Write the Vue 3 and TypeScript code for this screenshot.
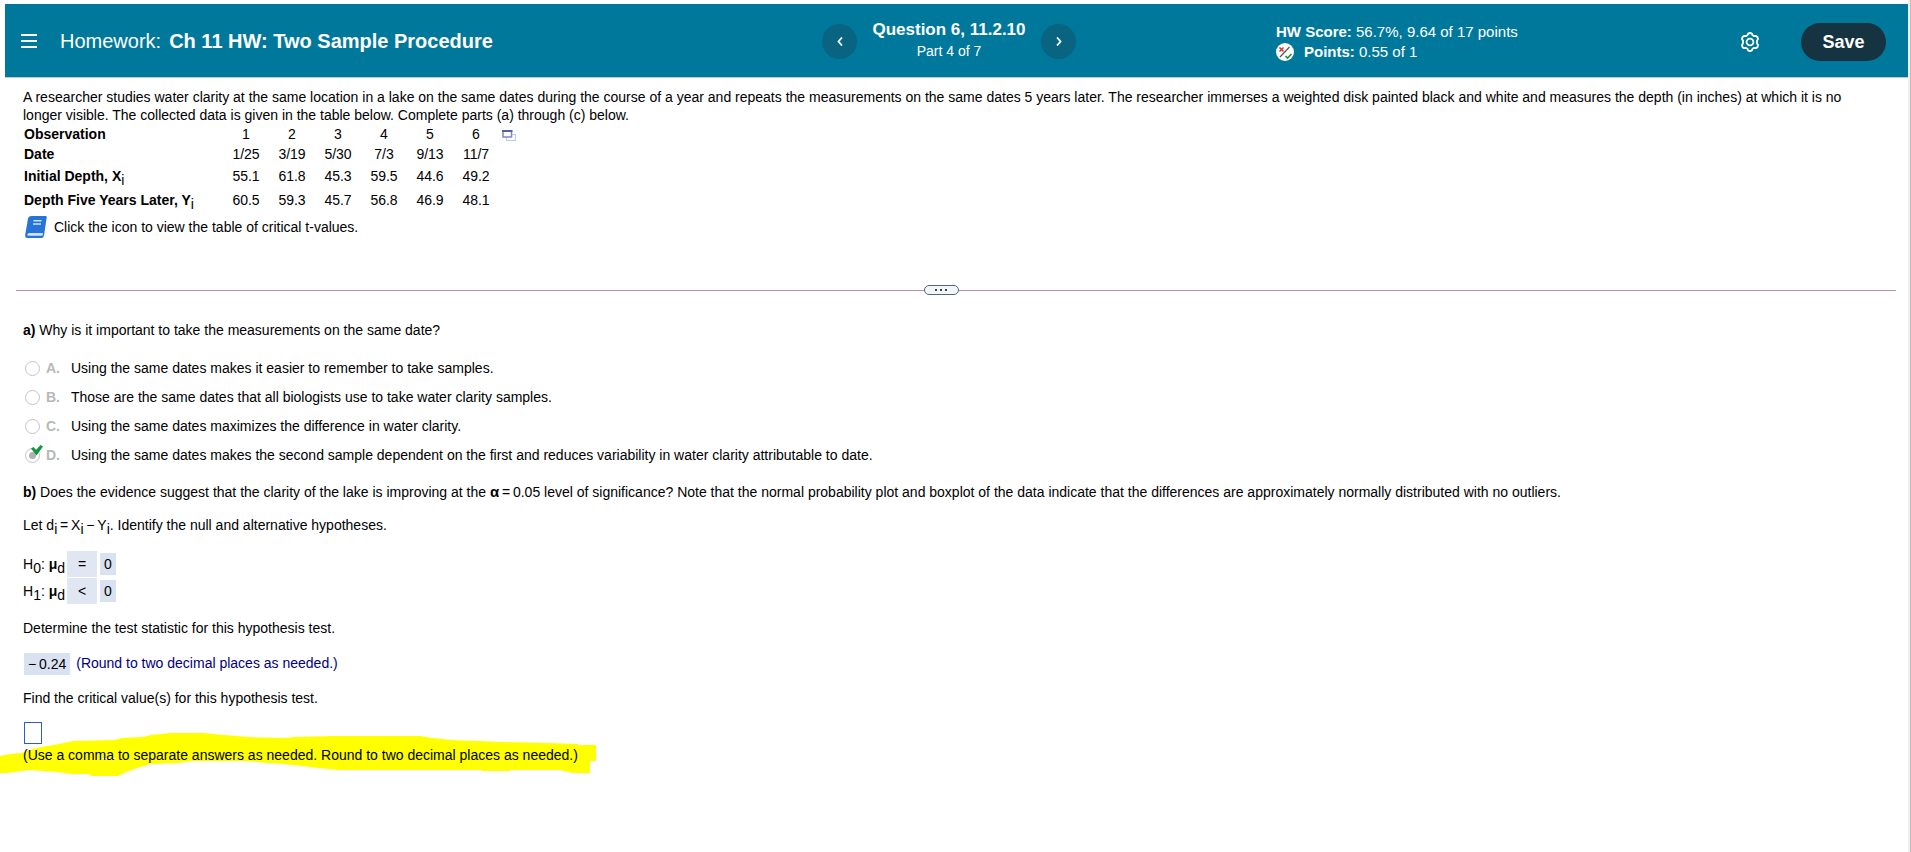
<script setup lang="ts">
import { ref } from 'vue'

interface Row {
  label: string
  sub?: string
  values: string[]
}

const rows: Row[] = [
  { label: 'Date', values: ['1/25', '3/19', '5/30', '7/3', '9/13', '11/7'] },
  { label: 'Initial Depth, X', sub: 'i', values: ['55.1', '61.8', '45.3', '59.5', '44.6', '49.2'] },
  { label: 'Depth Five Years Later, Y', sub: 'i', values: ['60.5', '59.3', '45.7', '56.8', '46.9', '48.1'] },
]

const choices = [
  { key: 'A', text: 'Using the same dates makes it easier to remember to take samples.' },
  { key: 'B', text: 'Those are the same dates that all biologists use to take water clarity samples.' },
  { key: 'C', text: 'Using the same dates maximizes the difference in water clarity.' },
  { key: 'D', text: 'Using the same dates makes the second sample dependent on the first and reduces variability in water clarity attributable to date.' },
]

const hypotheses = [
  { index: '0', sign: '=', value: '0' },
  { index: '1', sign: '<', value: '0' },
]

const correct = 'D'
const selected = ref('D')
const critical = ref('')
</script>

<template>
  <div class="page">
    <header class="bar">
      <div class="bar-left">
        <button class="icon-btn" type="button" aria-label="Menu">
          <svg width="16" height="14" viewBox="0 0 16 14"><path d="M0 1h16M0 7h16M0 13h16" stroke="#fff" stroke-width="2" /></svg>
        </button>
        <h1 class="title"><span class="kind">Homework:</span><span>Ch 11 HW: Two Sample Procedure</span></h1>
      </div>
      <div class="bar-mid">
        <button class="round" type="button" aria-label="Previous question">
          <svg width="6" height="9" viewBox="0 0 6 9"><path d="M5 .5L1.5 4.5L5 8.5" fill="none" stroke="#fff" stroke-width="1.8" /></svg>
        </button>
        <div class="question">
          <strong>Question 6, 11.2.10</strong>
          <span>Part 4 of 7</span>
        </div>
        <button class="round" type="button" aria-label="Next question">
          <svg width="6" height="9" viewBox="0 0 6 9"><path d="M1 .5L4.5 4.5L1 8.5" fill="none" stroke="#fff" stroke-width="1.8" /></svg>
        </button>
      </div>
      <div class="bar-right">
        <div class="score">
          <div><b>HW Score:</b> 56.7%, 9.64 of 17 points</div>
          <div class="points">
            <svg width="18" height="18" viewBox="0 0 18 18">
              <circle cx="9" cy="9" r="9" fill="#fff" />
              <path d="M3.500 4.500l4 4M7.500 4.500l-4 4" stroke="#d8342c" stroke-width="1.500" />
              <path d="M13.500 4L4 14" stroke="#555" stroke-width="1.200" />
              <path d="M9.500 13l2 2L15.500 11" fill="none" stroke="#1f8f45" stroke-width="1.600" />
            </svg>
            <span><b>Points:</b> 0.55 of 1</span>
          </div>
        </div>
        <div class="actions">
          <button class="icon-btn" type="button" aria-label="Settings">
            <svg width="20" height="20" viewBox="0 0 20 20" fill="none" stroke="#fff" stroke-width="1.8">
              <path d="M8 1.8Q10 .2 12 1.8L12.6 3.3L14.2 4.1L15.9 3.8Q18.2 4.8 18 7.2L17 8.6V11.4L18 12.8Q18.2 15.2 15.9 16.2L14.2 15.9L12.6 16.7L12 18.2Q10 19.8 8 18.2L7.4 16.7L5.8 15.9L4.1 16.2Q1.8 15.2 2 12.8L3 11.4V8.6L2 7.2Q1.8 4.8 4.1 3.8L5.8 4.1L7.4 3.3Z" stroke-linejoin="round" />
              <circle cx="10" cy="10" r="3.4" />
            </svg>
          </button>
          <button class="save" type="button">Save</button>
        </div>
      </div>
    </header>

    <main class="content">
      <section class="problem">
        <p class="intro">A researcher studies water clarity at the same location in a lake on the same dates during the course of a year and repeats the measurements on the same dates 5 years later. The researcher immerses a weighted disk painted black and white and measures the depth (in inches) at which it is no longer visible. The collected data is given in the table below. Complete parts (a) through (c) below.</p>
        <div class="data">
          <table>
            <thead>
              <tr>
                <th class="label" scope="row">Observation</th>
                <td v-for="n in 6" :key="n">{{ n }}</td>
              </tr>
            </thead>
            <tbody>
              <tr v-for="row in rows" :key="row.label" :class="{ tall: row.sub }">
                <th class="label" scope="row">{{ row.label }}<sub v-if="row.sub">{{ row.sub }}</sub></th>
                <td v-for="(value, i) in row.values" :key="i">{{ value }}</td>
              </tr>
            </tbody>
          </table>
          <button class="icon-btn popout" type="button" aria-label="Open table in a window">
            <svg width="14" height="11" viewBox="0 0 14 11">
              <rect x="4.500" y="4.500" width="9" height="6" fill="#fff" stroke="#c3c8e6" stroke-width="1.200" />
              <rect x="1" y="1" width="8.500" height="6" fill="#fff" stroke="#8088c0" stroke-width="1.500" />
              <path d="M0 1h10.500" stroke="#5560a8" stroke-width="2" />
            </svg>
          </button>
        </div>
        <div class="book">
          <button class="icon-btn" type="button" aria-label="View table of critical t-values">
            <svg width="22" height="22" viewBox="0 0 22 22">
              <path d="M6 0H20.5Q22 0 21.7 1.6L19 19.5Q18.5 22 16.5 22H2.5Q-.2 22 .2 19L3 2.5Q3.5 0 6 0Z" fill="#2574d8" />
              <path d="M2.300 18.800q.3-1.800 2-1.800H18l-.5 2.800H3.200Q2.200 19.700 2.300 18.800Z" fill="#cfe2fa" />
              <path d="M8.500 4.700H16.500M8 8H16" stroke="#cfe2fa" stroke-width="1.500" />
            </svg>
          </button>
          <span>Click the icon to view the table of critical t-values.</span>
        </div>
      </section>

      <div class="divider">
        <button class="handle" type="button" aria-label="Resize panels"><i></i><i></i><i></i></button>
      </div>

      <section class="parts">
        <p><b>a)</b> Why is it important to take the measurements on the same date?</p>
        <div class="choices" role="radiogroup">
          <label v-for="choice in choices" :key="choice.key" class="choice">
            <span class="mark">
              <input v-model="selected" type="radio" name="reason" :value="choice.key" disabled />
              <svg v-if="choice.key === correct" class="tick" width="12" height="11" viewBox="0 0 12 11"><path d="M0 3.500L2.500 2L5 5L9.500 0L12 1.500L5.500 10.500Z" fill="#0f9640" /></svg>
            </span>
            <span class="letter">{{ choice.key }}.</span>
            <span>{{ choice.text }}</span>
          </label>
        </div>
        <p><b>b)</b> Does the evidence suggest that the clarity of the lake is improving at the <b class="greek">α</b>&#8201;=&#8201;0.05 level of significance? Note that the normal probability plot and boxplot of the data indicate that the differences are approximately normally distributed with no outliers.</p>
        <p class="let">Let d<sub>i</sub>&#8201;=&#8201;X<sub>i</sub>&#8201;−&#8201;Y<sub>i</sub>. Identify the null and alternative hypotheses.</p>
        <div class="hypotheses">
          <div v-for="h in hypotheses" :key="h.index" class="hypothesis">
            <span class="symbol">H<sub>{{ h.index }}</sub>: <b>μ</b><sub>d</sub></span>
            <span class="sign">{{ h.sign }}</span>
            <span class="answer">{{ h.value }}</span>
          </div>
        </div>
        <p>Determine the test statistic for this hypothesis test.</p>
        <p class="statistic"><span class="answer">−&#8201;0.24</span><span class="hint">(Round to two decimal places as needed.)</span></p>
        <p><label for="critical">Find the critical value(s) for this hypothesis test.</label></p>
        <input id="critical" v-model="critical" class="entry" type="text" />
        <p class="marked">
          <svg class="marker" width="600" height="48" viewBox="0 733 600 48">
            <path d="M0 758L10 756L22 755L33 751L41 749L59 746L73 743L114 742L122 740L143 739L151 737L171 735H204L224 737L249 739L286 740L294 739L333 738H420L433 740L451 742L504 744L547 745L578 746V747H596V763H590V775H573L559 772H510V773H482V772H339L318 770L302 768L282 766L267 765L245 763H192L180 765L151 766L137 770L124 775L118 778H92L88 776L71 776L57 774L29 772L8 775H0Z" fill="#ff0" />
            <path d="M375 754.500H391M102 760.500H116" stroke="#fff" />
          </svg>
          <span>(Use a comma to separate answers as needed. Round to two decimal places as needed.)</span>
        </p>
      </section>
    </main>
  </div>
</template>

<style>
body {
  margin: 0;
  background: #fff;
}
</style>

<style scoped>
.page {
  box-sizing: border-box;
  min-height: 100vh;
  padding: 4px 0 0 5px;
  border-right: 1px solid #bdbdbd;
  box-shadow: inset -2px 0 #f0f0f0;
  font: 14px/18px "Liberation Sans", Arial, sans-serif;
  color: #000;
}
button {
  padding: 0;
  border: 0;
  font: inherit;
  color: inherit;
  background: none;
  cursor: pointer;
}
svg {
  display: block;
}
p {
  margin: 0;
}
sub {
  font-size: 14px;
  line-height: 0;
  vertical-align: -4px;
}
.bar {
  display: grid;
  grid-template-columns: 817fr 454fr 632fr;
  align-items: center;
  height: 73px;
  margin-right: 2px;
  border-bottom: 1px solid #b9cdd6;
  background: #00789c;
  color: #fff;
}
.bar-left,
.bar-mid,
.bar-right,
.actions,
.points {
  display: flex;
  align-items: center;
}
.bar-left {
  gap: 23px;
  padding-left: 16px;
}
.title {
  display: flex;
  gap: 8px;
  margin: 0;
  font-size: 20px;
  line-height: 24px;
}
.kind {
  font-weight: 400;
}
.bar-mid {
  gap: 12px;
  padding-top: 2px;
}
.round {
  display: grid;
  place-items: center;
  width: 35px;
  height: 35px;
  border-radius: 50%;
  background: #086480;
}
.question {
  display: flex;
  flex-direction: column;
  align-items: center;
  width: 160px;
  padding-bottom: 4px;
}
.question strong {
  font-size: 17px;
  line-height: 22px;
}
.question span {
  line-height: 20px;
}
.bar-right {
  justify-content: space-between;
  padding: 2px 22px 0 0;
}
.score {
  font-size: 15px;
  line-height: 20px;
}
.points {
  gap: 10px;
}
.actions {
  gap: 41px;
}
.save {
  width: 85px;
  height: 38px;
  border-radius: 19px;
  background: #163342;
  font-size: 18px;
  font-weight: 700;
}
.content {
  padding: 10px 14px 0 11px;
}
.problem,
.parts {
  padding: 0 7px;
}
.intro {
  padding-right: 14px;
}
.data {
  display: flex;
  align-items: flex-start;
  gap: 3px;
}
table {
  border-collapse: collapse;
}
th,
td {
  padding: 1px 0;
  width: 46px;
  text-align: center;
  vertical-align: baseline;
}
.label {
  width: 199px;
  padding-left: 1px;
  text-align: left;
}
.label sub {
  font-weight: 400;
}
.tall th,
.tall td {
  padding: 3px 0;
}
.tall .label {
  padding-left: 1px;
}
.popout {
  margin-top: 6px;
}
.book {
  display: flex;
  align-items: center;
  gap: 7px;
  padding: 4px 0 0 2px;
}
.divider {
  display: grid;
  place-items: center;
  height: 12px;
  margin-top: 46px;
  padding-right: 30px;
  background: linear-gradient(#b8919b, #b8919b) center / 100% 1px no-repeat;
}
.handle {
  display: flex;
  align-items: center;
  justify-content: center;
  gap: 3px;
  box-sizing: border-box;
  width: 35px;
  height: 10px;
  border: 1px solid #50677a;
  border-radius: 5px;
  background: #f3f6f8;
}
.handle i {
  width: 2px;
  height: 2px;
  background: #444;
}
.parts {
  padding-top: 25px;
}
.choices {
  display: flex;
  flex-direction: column;
  gap: 11px;
  padding: 20px 0 19px 2px;
}
.choice {
  display: flex;
  align-items: center;
}
.mark {
  position: relative;
  width: 21px;
}
.mark input {
  display: grid;
  place-items: center;
  appearance: none;
  box-sizing: border-box;
  width: 15px;
  height: 15px;
  margin: 0;
  border: 1px solid #c4c4c4;
  border-radius: 50%;
  background: #fff;
}
.mark input:checked::before {
  content: "";
  width: 7px;
  height: 7px;
  border-radius: 50%;
  background: #b0b0b0;
}
.tick {
  position: absolute;
  left: 6px;
  top: -3px;
}
.letter {
  width: 25px;
  font-weight: 700;
  color: #b8b8b8;
}
.greek {
  font-size: 15px;
}
.let {
  padding-top: 15px;
}
.hypotheses {
  padding: 17px 0 14px;
}
.hypothesis {
  display: flex;
  align-items: center;
  margin-bottom: 1px;
}
.symbol {
  width: 44px;
}
.sign {
  width: 30px;
  line-height: 26px;
  text-align: center;
  background: #e1e7f2;
}
.answer {
  padding: 0 4px;
  line-height: 22px;
  background: #d9e2f1;
}
.sign + .answer {
  margin-left: 3px;
}
.statistic {
  display: flex;
  gap: 6px;
  padding: 16px 0 14px 1px;
}
.hint {
  line-height: 20px;
  color: #000080;
}
.entry {
  display: block;
  box-sizing: border-box;
  width: 18px;
  height: 22px;
  margin: 15px 0 2px 1px;
  padding: 0 2px;
  border: 1px solid #2a5fc9;
  background: #fff;
  font: inherit;
}
.marked {
  position: relative;
}
.marked span {
  position: relative;
}
.marker {
  position: absolute;
  left: -23px;
  top: -15px;
}
</style>
